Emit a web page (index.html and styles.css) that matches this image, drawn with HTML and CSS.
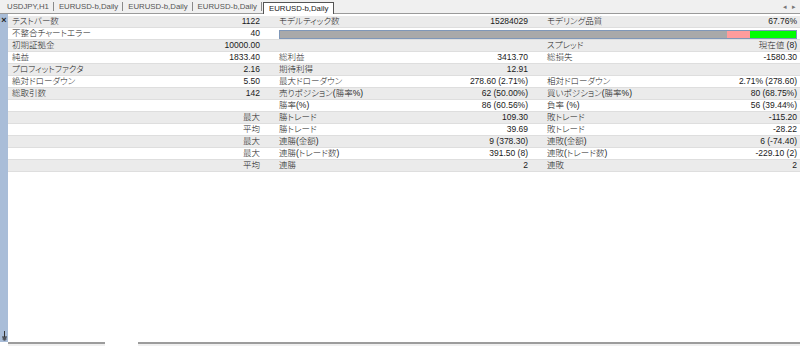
FILE: index.html
```html
<!DOCTYPE html>
<html lang="ja">
<head>
  <meta charset="UTF-8">
  <title>Strategy Tester Report</title>
  <link rel="stylesheet" href="styles.css">
</head>
<body>
  <div class="tabbar">
    <span class="tab">USDJPY,H1</span>
    <span class="tab">EURUSD-b,Daily</span>
    <span class="tab">EURUSD-b,Daily</span>
    <span class="tab">EURUSD-b,Daily</span>
    <span class="tab active">EURUSD-b,Daily</span>
    <span class="scroll-arrows"><span>&#9666;</span><span>&#9656;</span></span>
  </div>

  <div class="main">
    <div class="sidebar">
      <span class="close">&#215;</span>
      <svg class="pin" width="7" height="10" viewBox="0 0 7 10">
        <path d="M3.5 0 V6 M1 6 H6 M2 7 H5 M1.5 8 H5.5 M2.5 9 H4.5" stroke="#333" stroke-width="1" fill="none"/>
      </svg>
    </div>

    <div class="report">
      <div class="row">
        <div class="pair"><span class="label">テストバー数</span><span class="value">1122</span></div>
        <div class="pair"><span class="label">モデルティック数</span><span class="value">15284029</span></div>
        <div class="pair"><span class="label">モデリング品質</span><span class="value">67.76%</span></div>
      </div>
      <div class="row">
        <div class="pair"><span class="label">不整合チャートエラー</span><span class="value">40</span></div>
        <div class="pair wide">
          <div class="quality-bar">
            <span class="bar-gray"></span>
            <span class="bar-red"></span>
            <span class="bar-green"></span>
          </div>
        </div>
      </div>
      <div class="row">
        <div class="pair"><span class="label">初期証拠金</span><span class="value">10000.00</span></div>
        <div class="pair"></div>
        <div class="pair"><span class="label">スプレッド</span><span class="value">現在値 (8)</span></div>
      </div>
      <div class="row">
        <div class="pair"><span class="label">純益</span><span class="value">1833.40</span></div>
        <div class="pair"><span class="label">総利益</span><span class="value">3413.70</span></div>
        <div class="pair"><span class="label">総損失</span><span class="value">-1580.30</span></div>
      </div>
      <div class="row">
        <div class="pair"><span class="label">プロフィットファクタ</span><span class="value">2.16</span></div>
        <div class="pair"><span class="label">期待利得</span><span class="value">12.91</span></div>
        <div class="pair"></div>
      </div>
      <div class="row">
        <div class="pair"><span class="label">絶対ドローダウン</span><span class="value">5.50</span></div>
        <div class="pair"><span class="label">最大ドローダウン</span><span class="value">278.60 (2.71%)</span></div>
        <div class="pair"><span class="label">相対ドローダウン</span><span class="value">2.71% (278.60)</span></div>
      </div>
      <div class="row">
        <div class="pair"><span class="label">総取引数</span><span class="value">142</span></div>
        <div class="pair"><span class="label">売りポジション(勝率%)</span><span class="value">62 (50.00%)</span></div>
        <div class="pair"><span class="label">買いポジション(勝率%)</span><span class="value">80 (68.75%)</span></div>
      </div>
      <div class="row">
        <div class="pair"></div>
        <div class="pair"><span class="label">勝率(%)</span><span class="value">86 (60.56%)</span></div>
        <div class="pair"><span class="label">負率 (%)</span><span class="value">56 (39.44%)</span></div>
      </div>
      <div class="row">
        <div class="pair"><span class="label"></span><span class="value">最大</span></div>
        <div class="pair"><span class="label">勝トレード</span><span class="value">109.30</span></div>
        <div class="pair"><span class="label">敗トレード</span><span class="value">-115.20</span></div>
      </div>
      <div class="row">
        <div class="pair"><span class="label"></span><span class="value">平均</span></div>
        <div class="pair"><span class="label">勝トレード</span><span class="value">39.69</span></div>
        <div class="pair"><span class="label">敗トレード</span><span class="value">-28.22</span></div>
      </div>
      <div class="row">
        <div class="pair"><span class="label"></span><span class="value">最大</span></div>
        <div class="pair"><span class="label">連勝(金額)</span><span class="value">9 (378.30)</span></div>
        <div class="pair"><span class="label">連敗(金額)</span><span class="value">6 (-74.40)</span></div>
      </div>
      <div class="row">
        <div class="pair"><span class="label"></span><span class="value">最大</span></div>
        <div class="pair"><span class="label">連勝(トレード数)</span><span class="value">391.50 (8)</span></div>
        <div class="pair"><span class="label">連敗(トレード数)</span><span class="value">-229.10 (2)</span></div>
      </div>
      <div class="row">
        <div class="pair"><span class="label"></span><span class="value">平均</span></div>
        <div class="pair"><span class="label">連勝</span><span class="value">2</span></div>
        <div class="pair"><span class="label">連敗</span><span class="value">2</span></div>
      </div>
    </div>
  </div>

  <div class="bottom-strip">
    <span class="strip-seg first"></span>
    <span class="strip-gap"></span>
    <span class="strip-seg rest"></span>
  </div>
</body>
</html>
```

FILE: styles.css
```css
html, body {
  margin: 0;
  padding: 0;
}

body {
  width: 800px;
  height: 346px;
  overflow: hidden;
  background-color: white;
  font-family: "Liberation Sans", "Noto Sans CJK JP", sans-serif;
  color: #1a1a1a;
  display: flex;
  flex-direction: column;
}

/* top tab strip */
.tabbar {
  height: 13px;
  flex: none;
  display: flex;
  align-items: flex-end;
  background-color: #f0f0f0;
  border-bottom: 1px solid #9a9a9a;
  padding-left: 2px;
  font-size: 7.8px;
  color: #555;
}

.tab {
  height: 9px;
  line-height: 9px;
  padding: 0 4px 0 5px;
  margin-bottom: 2px;
  border-right: 1px solid #8a8a8a;
  white-space: nowrap;
}

.tab.active {
  height: 11px;
  line-height: 11px;
  margin: 0 0 -1px 1px;
  padding: 0 5px;
  border: 1px solid #555;
  border-bottom: none;
  background-color: white;
  color: #222;
}

.scroll-arrows {
  margin-left: auto;
  margin-right: 4px;
  margin-bottom: 2px;
  display: flex;
  gap: 5px;
  font-size: 7px;
  color: #777;
}

.main {
  flex: 1;
  display: flex;
  min-height: 0;
}

.sidebar {
  width: 8px;
  flex: none;
  background-color: #a9bdd8;
  display: flex;
  flex-direction: column;
  align-items: center;
  justify-content: space-between;
  padding: 2px 0 1px;
  box-sizing: border-box;
}

.close {
  font-size: 9px;
  line-height: 8px;
  font-weight: bold;
  color: #222;
}

.report {
  flex: 1;
  padding-top: 2px;
  font-size: 8.5px;
  font-weight: 300;
  font-feature-settings: "palt";
}

.row {
  display: grid;
  grid-template-columns: 255px 268px 1fr;
  height: 12px;
  line-height: 11px;
  box-sizing: border-box;
  border-bottom: 1px solid #dedede;
}

.row:nth-child(odd) {
  background-color: #ebebeb;
}

.pair {
  display: flex;
  justify-content: space-between;
  padding: 0 3px 0 16px;
  white-space: nowrap;
}

.row .pair:first-child {
  padding-left: 4px;
}

.pair.wide {
  grid-column: 2 / 4;
  align-items: center;
}

.quality-bar {
  flex: 1;
  height: 9px;
  display: flex;
  box-sizing: border-box;
  border: 1px solid #7f97b8;
  margin-top: 1px;
}

.bar-gray {
  width: 447px;
  background-color: #a9a9a9;
}

.bar-red {
  width: 23px;
  background-color: #ff9c9c;
}

.bar-green {
  flex: 1;
  background-color: #00ff00;
}

/* bottom tab strip edge */
.bottom-strip {
  height: 4px;
  flex: none;
  display: flex;
}

.strip-seg {
  border-top: 2px solid #9c9c9c;
  background-color: #f0f0f0;
}

.strip-seg.first {
  width: 97px;
  margin-left: 8px;
}

.strip-gap {
  width: 33px;
}

.strip-seg.rest {
  flex: 1;
}
```
